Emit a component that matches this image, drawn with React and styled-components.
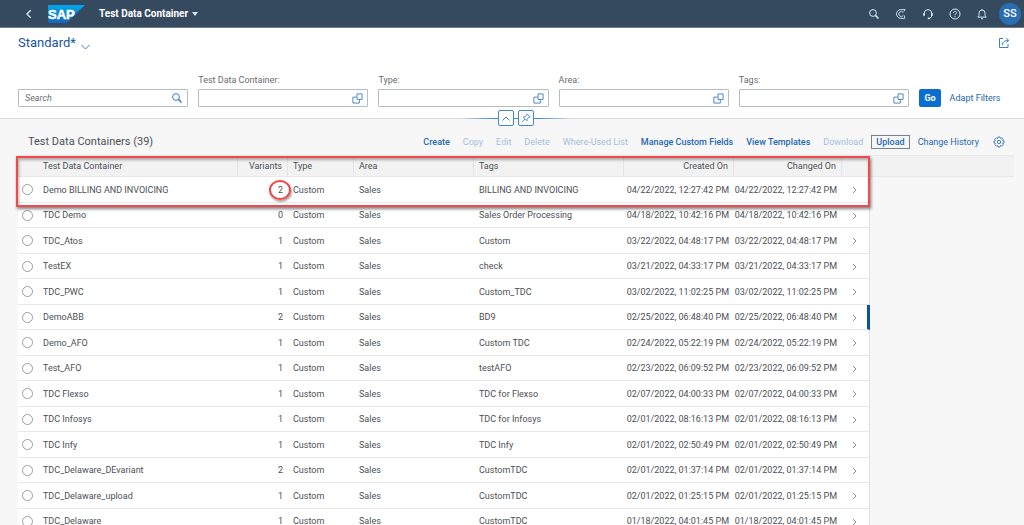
import React, { useState } from 'react';
import styled, { createGlobalStyle, css } from 'styled-components';

const GlobalStyle = createGlobalStyle`
  *, *::after {
    box-sizing: border-box;
  }

  body {
    margin: 0;
    background: #f7f7f7;
    color: #4c5054;
    font-family: Roboto, "Liberation Sans", sans-serif;
    font-size: 9px;
    line-height: 12px;
  }

  button, input {
    font: inherit;
    color: inherit;
  }
`;

const Page = styled.div`
  height: 100vh;
  overflow: hidden;
`;

const PlainButton = styled.button`
  display: inline-flex;
  align-items: center;
  justify-content: center;
  padding: 0;
  border: none;
  background: none;
  cursor: pointer;
`;

/* Shell bar */

const ShellBar = styled.header`
  display: flex;
  align-items: center;
  height: 28px;
  padding: 0 3px 0 24px;
  background: #354a5f;
  border-bottom: 1px solid #6d7c8b;
  color: #fff;
`;

const BackButton = styled(PlainButton)`
  width: 10px;
  margin-right: 14px;
  color: #d1e8ff;
`;

const Logo = styled.svg`
  width: 37px;
  height: 18px;
  margin-right: 14px;
`;

const AppTitle = styled(PlainButton)`
  gap: 4px;
  font-size: 10px;
  font-weight: 700;
`;

const ShellActions = styled.div`
  display: flex;
  align-items: center;
  gap: 15px;
  margin-left: auto;
  color: #d1e8ff;
`;

const ShellAction = styled(PlainButton)`
  width: 12px;
  height: 12px;
`;

const Avatar = styled(PlainButton)`
  width: 22px;
  height: 22px;
  margin-left: -4px;
  border-radius: 50%;
  background: #286eb4;
  color: #fff;
  font-size: 11px;
  font-weight: 500;
`;

/* Filter bar */

const FilterHeader = styled.section`
  position: relative;
  padding: 0 14px 11px 18px;
  background: #fff;
  border-bottom: 1px solid #dcdcdc;
`;

const VariantRow = styled.div`
  display: flex;
  align-items: center;
  justify-content: space-between;
  height: 30px;
  margin-bottom: 16px;
`;

const VariantButton = styled(PlainButton)`
  align-items: flex-end;
  gap: 5px;
  color: #1b55a0;
  font-size: 13px;
  line-height: 14px;
`;

const ShareButton = styled(PlainButton)`
  width: 12px;
  height: 12px;
  color: #3f7fc1;
`;

const Filters = styled.form`
  display: flex;
  align-items: flex-end;
  gap: 10px;
  padding-right: 11px;
`;

const Field = styled.div`
  display: flex;
  flex: 1;
  flex-direction: column;
  gap: 3px;
  min-width: 0;
  color: #6a6d70;
`;

const InputBox = styled.div`
  display: flex;
  align-items: center;
  height: 18px;
  padding: 0 4px 0 6px;
  background: #fff;
  border: 1px solid #b9bdc2;
  border-radius: 1px;
  color: #3f7fc1;
`;

const TextInput = styled.input`
  flex: 1;
  min-width: 0;
  padding: 0;
  border: none;
  outline: none;
  background: none;
  color: #32363a;

  &::placeholder {
    color: #6a6d70;
    font-style: italic;
    opacity: 1;
  }
`;

const GoButton = styled(PlainButton)`
  width: 22px;
  height: 18px;
  border-radius: 2px;
  background: #0a6ed1;
  color: #fff;
  font-weight: 700;
`;

const AdaptButton = styled(PlainButton)`
  width: 48px;
  height: 18px;
  color: #2467b2;
  white-space: nowrap;
`;

const HeaderToggles = styled.div`
  position: absolute;
  bottom: -8px;
  left: 50%;
  display: flex;
  align-items: center;
  justify-content: center;
  gap: 4px;
  width: 112px;
  height: 16px;
  margin-left: -52px;
  background: linear-gradient(to right, transparent, #3f86cc 36px, #3f86cc 76px, transparent) center / 100% 1px no-repeat;
`;

const ToggleButton = styled(PlainButton)`
  width: 16px;
  height: 16px;
  background: #fff;
  border: 1px solid #4688c8;
  border-radius: 2px;
  color: #3f7fc1;
`;

/* Table */

const Content = styled.main`
  padding: 10px 10px 0 18px;
`;

const Toolbar = styled.div`
  display: flex;
  align-items: center;
  justify-content: space-between;
  height: 26px;
  padding: 0 9px 0 10px;
`;

const TableTitle = styled.h1`
  margin: 0;
  font-size: 11px;
  font-weight: 400;
  line-height: 16px;
`;

const ToolbarActions = styled.div`
  display: flex;
  align-items: center;
  gap: 3px;
`;

const ToolbarButton = styled(PlainButton)`
  height: 14px;
  padding: 0 4px;
  border: 1px solid ${({ $outlined }) => ($outlined ? '#7b8188' : 'transparent')};
  color: #2467b2;
  font-weight: ${({ $strong }) => ($strong ? 500 : 400)};
  white-space: nowrap;

  &:disabled {
    color: #a3bfdc;
    cursor: default;
  }
`;

const SettingsButton = styled(PlainButton)`
  width: 12px;
  height: 12px;
  margin-left: 6px;
  color: #3f7fc1;
`;

const TableArea = styled.div`
  position: relative;
`;

const Table = styled.table`
  width: 100%;
  table-layout: fixed;
  border-collapse: separate;
  border-spacing: 0;
`;

const Col = styled.col`
  width: ${({ $width }) => ($width ? `${$width}px` : 'auto')};
`;

const HeadCell = styled.th`
  height: 22px;
  padding: 0 5px;
  background: #f2f2f2;
  border-top: 1px solid #e8e8e8;
  border-bottom: 1px solid #e8e8e8;
  border-right: 1px solid ${({ $divider }) => ($divider ? '#e4e4e4' : 'transparent')};
  font-weight: 400;
  text-align: ${({ $align }) => $align || 'left'};
  white-space: nowrap;
`;

const Row = styled.tr`
  height: 26px;

  &:nth-child(even) {
    height: 25px;
  }
`;

const Cell = styled.td`
  padding: ${({ $align }) => ($align === 'right' ? '0 5px 0 0' : '0 5px')};
  background: #fff;
  border-bottom: 1px solid #e8e8e8;
  text-align: ${({ $align }) => $align || 'left'};
  white-space: nowrap;
`;

const RadioCell = styled(Cell)`
  padding: 0 4px;
`;

const NavCell = styled(Cell)`
  padding: 0 12px 0 0;
  border-right: 1px solid #e0e0e0;
  color: #8a8e92;
  text-align: right;

  ${({ $navigated }) =>
    $navigated &&
    css`
      padding-right: 10px;
      border-right: 3px solid #0854a0;
    `}

  svg {
    display: inline-block;
    vertical-align: middle;
  }
`;

const Radio = styled.input`
  display: block;
  width: 11px;
  height: 11px;
  margin: 0;
  appearance: none;
  background: #fff;
  border: 1px solid #999ea4;
  border-radius: 50%;

  &:checked {
    box-shadow: inset 0 0 0 2px #fff;
    background: #0854a0;
  }
`;

/* Callouts drawn over the table */

const RowCallout = styled.div`
  position: absolute;
  top: 1px;
  left: -2px;
  width: 854px;
  height: 51px;
  border: 2px solid #f04a4c;
  box-shadow: 1px 2px 3px rgba(0, 0, 0, 0.5), inset 1px 2px 3px rgba(0, 0, 0, 0.3);
  pointer-events: none;
`;

const CircledValue = styled.span`
  position: relative;

  &::after {
    content: '';
    position: absolute;
    top: 50%;
    left: 50%;
    width: 22px;
    height: 20px;
    border: 2px solid #ee4548;
    border-radius: 50%;
    box-shadow: 1px 2px 2px rgba(0, 0, 0, 0.35);
    transform: translate(-50%, -50%);
  }
`;

const Icon = ({ size = 12, width = 1, children }) => (
  <svg
    width={size}
    height={size}
    viewBox="0 0 12 12"
    fill="none"
    stroke="currentColor"
    strokeWidth={width}
    aria-hidden="true"
  >
    {children}
  </svg>
);

const SearchIcon = () => (
  <Icon>
    <circle cx="5" cy="5" r="3.4" />
    <path d="M7.4 7.4 10.5 10.5" strokeWidth="1.5" />
  </Icon>
);

const CopilotIcon = () => (
  <Icon width={0.9}>
    <path d="M10.2 1.6H5.9a4.4 4.4 0 1 0 0 8.8h3.700" />
    <path d="M10.2 1.6 8.800 3.400M9.600 10.400V7.500" />
    <path d="M8.400 4.700a2.500 2.500 0 1 0 0 2.600" />
  </Icon>
);

const HeadsetIcon = () => (
  <Icon>
    <path d="M2.2 7V5.4a3.8 3.8 0 0 1 7.6 0V7c0 2-1.2 3.2-3 3.4" />
    <path d="M2 5.2v2.6M10 5.2v2.6M5.8 10.4h1.6" strokeWidth="1.7" />
  </Icon>
);

const HelpIcon = () => (
  <Icon>
    <circle cx="6" cy="6" r="5" />
    <path d="M4.5 4.9c0-2 3-2 3-.1C7.5 5.800 6 5.800 6 7.2M6 8v1.1" />
  </Icon>
);

const BellIcon = () => (
  <Icon>
    <path d="M1.7 9.1C3 8.100 3 7.100 3 5.100a3 3 0 0 1 6 0c0 2 0 3 1.3 4zM5 10.7h2M6 1v1.1" />
  </Icon>
);

const ValueHelpIcon = () => (
  <Icon size={11}>
    <path d="M5 4.500H1v6.500h7V7.500" />
    <path d="M5.500 1H11v6H5.500z" />
  </Icon>
);

const ShareIcon = () => (
  <Icon>
    <path d="M5 1.500H1.500v9h8.500V7" />
    <path d="M4.500 8c0-3 2-4.600 6-4.600M8.400 1.300l2.400 2.100-2.400 2.200" />
  </Icon>
);

const SettingsIcon = () => (
  <Icon>
    <path d="M5 1h2l.4 1.400 1.300-.5 1.400 1.400-.5 1.300L11 5v2l-1.400.4.5 1.300-1.400 1.400-1.300-.5L7 11H5l-.4-1.400-1.300.5-1.400-1.400.5-1.300L1 7V5l1.400-.4-.5-1.300 1.400-1.400 1.300.5z" />
    <circle cx="6" cy="6" r="1.700" />
  </Icon>
);

const PinIcon = () => (
  <Icon size={10}>
    <path d="M7.200 1 11 4.800l-1.500.2-2.300 2.300.1 2.200L2.500 4.700l2.200.1L7 2.500zM4.800 7.200 1 11" />
  </Icon>
);

const filterFields = ['Test Data Container', 'Type', 'Area', 'Tags'];

const toolbarActions = [
  { label: 'Create', strong: true },
  { label: 'Copy', disabled: true },
  { label: 'Edit', disabled: true },
  { label: 'Delete', disabled: true },
  { label: 'Where-Used List', disabled: true },
  { label: 'Manage Custom Fields', strong: true },
  { label: 'View Templates', strong: true },
  { label: 'Download', disabled: true },
  { label: 'Upload', strong: true, outlined: true },
  { label: 'Change History' },
];

const columnWidths = [20, 200, 50, 66, 120, 150, 110, 108, 28, null];

const containers = [
  { name: 'Demo BILLING AND INVOICING', variants: 2, tags: 'BILLING AND INVOICING', date: '04/22/2022, 12:27:42 PM', circled: true },
  { name: 'TDC Demo', variants: 0, tags: 'Sales Order Processing', date: '04/18/2022, 10:42:16 PM' },
  { name: 'TDC_Atos', variants: 1, tags: 'Custom', date: '03/22/2022, 04:48:17 PM' },
  { name: 'TestEX', variants: 1, tags: 'check', date: '03/21/2022, 04:33:17 PM' },
  { name: 'TDC_PWC', variants: 1, tags: 'Custom_TDC', date: '03/02/2022, 11:02:25 PM' },
  { name: 'DemoABB', variants: 2, tags: 'BD9', date: '02/25/2022, 06:48:40 PM', navigated: true },
  { name: 'Demo_AFO', variants: 1, tags: 'Custom TDC', date: '02/24/2022, 05:22:19 PM' },
  { name: 'Test_AFO', variants: 1, tags: 'testAFO', date: '02/23/2022, 06:09:52 PM' },
  { name: 'TDC Flexso', variants: 1, tags: 'TDC for Flexso', date: '02/07/2022, 04:00:33 PM' },
  { name: 'TDC Infosys', variants: 1, tags: 'TDC for Infosys', date: '02/01/2022, 08:16:13 PM' },
  { name: 'TDC Infy', variants: 1, tags: 'TDC Infy', date: '02/01/2022, 02:50:49 PM' },
  { name: 'TDC_Delaware_DEvariant', variants: 2, tags: 'CustomTDC', date: '02/01/2022, 01:37:14 PM' },
  { name: 'TDC_Delaware_upload', variants: 1, tags: 'CustomTDC', date: '02/01/2022, 01:25:15 PM' },
  { name: 'TDC_Delaware', variants: 1, tags: 'CustomTDC', date: '01/18/2022, 04:01:45 PM' },
];

const Shell = () => (
  <ShellBar>
    <BackButton aria-label="Back">
      <Icon size={10} width={1.6}>
        <path d="M8 1.500 3.500 6 8 10.500" />
      </Icon>
    </BackButton>
    <Logo viewBox="0 0 37 18" role="img" aria-label="SAP">
      <defs>
        <linearGradient id="logoFill" x1="0" y1="0" x2="0" y2="1">
          <stop offset="0" stopColor="#00a8ea" />
          <stop offset="1" stopColor="#1764be" />
        </linearGradient>
      </defs>
      <path d="M0 0h37L18.500 18H0z" fill="url(#logoFill)" />
      <text
        x="0"
        y="14"
        fill="#fff"
        stroke="#fff"
        strokeWidth="0.5"
        fontFamily="Liberation Sans, sans-serif"
        fontSize="13"
        fontWeight="700"
      >
        SAP
      </text>
    </Logo>
    <AppTitle>
      Test Data Container
      <svg width="6" height="4" viewBox="0 0 6 4" aria-hidden="true">
        <path d="M0 0h6L3 4z" fill="#d1e8ff" />
      </svg>
    </AppTitle>
    <ShellActions>
      <ShellAction aria-label="Search"><SearchIcon /></ShellAction>
      <ShellAction aria-label="CoPilot"><CopilotIcon /></ShellAction>
      <ShellAction aria-label="Support"><HeadsetIcon /></ShellAction>
      <ShellAction aria-label="Help"><HelpIcon /></ShellAction>
      <ShellAction aria-label="Notifications"><BellIcon /></ShellAction>
      <Avatar>SS</Avatar>
    </ShellActions>
  </ShellBar>
);

const FilterBar = () => (
  <FilterHeader>
    <VariantRow>
      <VariantButton>
        Standard*
        <svg width="9" height="6" viewBox="0 0 9 6" fill="none" stroke="#4a78b4" aria-hidden="true">
          <path d="M.5 1 4.500 5l4-4" />
        </svg>
      </VariantButton>
      <ShareButton aria-label="Share"><ShareIcon /></ShareButton>
    </VariantRow>
    <Filters onSubmit={(e) => e.preventDefault()}>
      <Field>
        <InputBox>
          <TextInput type="text" placeholder="Search" aria-label="Search" />
          <SearchIcon />
        </InputBox>
      </Field>
      {filterFields.map((label) => (
        <Field key={label}>
          <label htmlFor={`filter-${label}`}>{label}:</label>
          <InputBox>
            <TextInput type="text" id={`filter-${label}`} />
            <ValueHelpIcon />
          </InputBox>
        </Field>
      ))}
      <GoButton type="submit">Go</GoButton>
      <AdaptButton type="button">Adapt Filters</AdaptButton>
    </Filters>
    <HeaderToggles>
      <ToggleButton aria-label="Collapse header">
        <svg width="8" height="5" viewBox="0 0 8 5" fill="none" stroke="currentColor" aria-hidden="true">
          <path d="M.5 4.500 4 1l3.500 3.500" />
        </svg>
      </ToggleButton>
      <ToggleButton aria-label="Pin header"><PinIcon /></ToggleButton>
    </HeaderToggles>
  </FilterHeader>
);

const ContainerTable = () => {
  const [selected, setSelected] = useState(null);

  return (
    <TableArea>
      <Table>
        <colgroup>
          {columnWidths.map((width, i) => (
            <Col key={i} $width={width} />
          ))}
        </colgroup>
        <thead>
          <tr>
            <HeadCell />
            <HeadCell $divider>Test Data Container</HeadCell>
            <HeadCell $divider $align="right">Variants</HeadCell>
            <HeadCell $divider>Type</HeadCell>
            <HeadCell $divider>Area</HeadCell>
            <HeadCell $divider>Tags</HeadCell>
            <HeadCell $divider $align="right">Created On</HeadCell>
            <HeadCell $divider $align="right">Changed On</HeadCell>
            <HeadCell $divider />
            <HeadCell />
          </tr>
        </thead>
        <tbody>
          {containers.map((item) => (
            <Row key={item.name}>
              <RadioCell>
                <Radio
                  type="radio"
                  name="container"
                  aria-label={item.name}
                  checked={selected === item.name}
                  onChange={() => setSelected(item.name)}
                />
              </RadioCell>
              <Cell>{item.name}</Cell>
              <Cell $align="right">
                {item.circled ? <CircledValue>{item.variants}</CircledValue> : item.variants}
              </Cell>
              <Cell>Custom</Cell>
              <Cell>Sales</Cell>
              <Cell>{item.tags}</Cell>
              <Cell $align="right">{item.date}</Cell>
              <Cell $align="right">{item.date}</Cell>
              <NavCell $navigated={item.navigated}>
                <svg width="5" height="8" viewBox="0 0 5 8" fill="none" stroke="currentColor" aria-hidden="true">
                  <path d="M1 1l3 3-3 3" />
                </svg>
              </NavCell>
            </Row>
          ))}
        </tbody>
      </Table>
      <RowCallout />
    </TableArea>
  );
};

const App = () => {
  return (
    <>
      <GlobalStyle />
      <Page>
        <Shell />
        <FilterBar />
        <Content>
          <Toolbar>
            <TableTitle>Test Data Containers (39)</TableTitle>
            <ToolbarActions>
              {toolbarActions.map(({ label, disabled, strong, outlined }) => (
                <ToolbarButton key={label} disabled={disabled} $strong={strong} $outlined={outlined}>
                  {label}
                </ToolbarButton>
              ))}
              <SettingsButton aria-label="Settings"><SettingsIcon /></SettingsButton>
            </ToolbarActions>
          </Toolbar>
          <ContainerTable />
        </Content>
      </Page>
    </>
  );
};

export default App;
